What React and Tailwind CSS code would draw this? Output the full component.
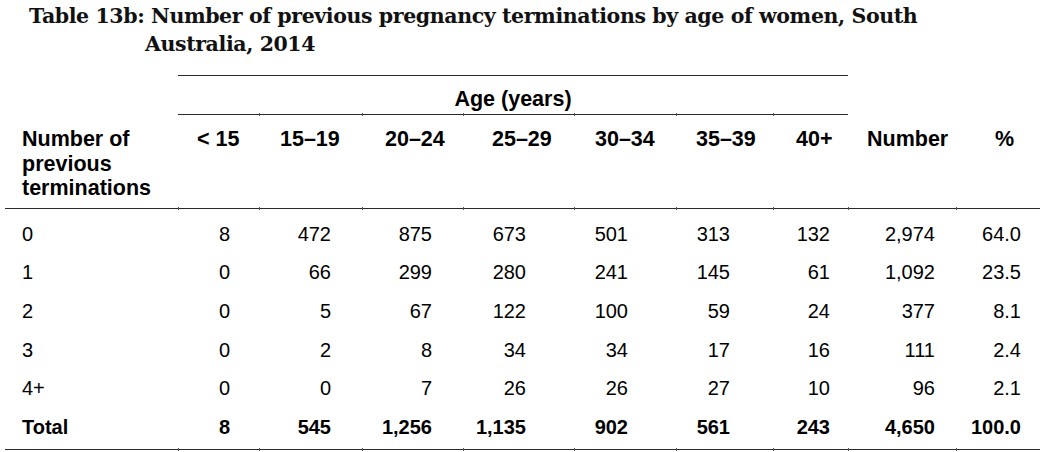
import React from "react";

const cols = [
  { h: "< 15", hp: "pl-[19px]", dp: "pr-[29px]" },
  { h: "15–19", hp: "pl-[21px]", dp: "pr-[31px]" },
  { h: "20–24", hp: "pl-[23px]", dp: "pr-[31px]" },
  { h: "25–29", hp: "pl-[29px]", dp: "pr-[48px]" },
  { h: "30–34", hp: "pl-[21px]", dp: "pr-[48px]" },
  { h: "35–39", hp: "pl-[20px]", dp: "pr-[43px]" },
  { h: "40+", hp: "pl-[23px]", dp: "pr-[18px]" },
  { h: "Number", hp: "pl-[19px]", dp: "pr-[21px]" },
  { h: "%", hp: "pl-[39px]", dp: "pr-[19px]" },
];

const rows = [
  ["0", "8", "472", "875", "673", "501", "313", "132", "2,974", "64.0"],
  ["1", "0", "66", "299", "280", "241", "145", "61", "1,092", "23.5"],
  ["2", "0", "5", "67", "122", "100", "59", "24", "377", "8.1"],
  ["3", "0", "2", "8", "34", "34", "17", "16", "111", "2.4"],
  ["4+", "0", "0", "7", "26", "26", "27", "10", "96", "2.1"],
  ["Total", "8", "545", "1,256", "1,135", "902", "561", "243", "4,650", "100.0"],
];

const grid =
  "grid grid-cols-[173px_81px_103px_101px_111px_102px_97px_75px_108px_84px]";

function Rule({ from = 0, to = 10, ticks = true }) {
  const cells = [];
  for (let i = 0; i < 10; i++) {
    if (i < from || i >= to) {
      cells.push(<div key={i} />);
    } else {
      cells.push(
        <div key={i} className="flex h-[3px] items-start">
          <div className="h-px w-full bg-[#2a2a2a]" />
        </div>
      );
    }
  }
  return (
    <div className="relative">
      <div className={grid}>{cells}</div>
      {ticks && (
        <div className={`${grid} absolute left-0 top-[-1px]`}>
          {Array.from({ length: 10 }).map((_, i) =>
            i > from && i < to ? (
              <div key={i} className="h-[3px] w-px bg-[#555]" />
            ) : (
              <div key={i} />
            )
          )}
        </div>
      )}
    </div>
  );
}

export default function App() {
  return (
    <div className="h-[452px] w-[1054px] overflow-hidden bg-white text-black">
      <div
        className="pl-[145px] pt-[2px] text-[20.5px] font-bold leading-[28px] tracking-[-0.4px] text-[#111] -indent-[116px]"
        style={{ fontFamily: '"DejaVu Serif", serif' }}
      >
        Table 13b: Number of previous pregnancy terminations by age of women, South
        <br />
        Australia, 2014
      </div>

      <div
        className="ml-[5px] mt-[17px] w-[1035px] text-[20px]"
        style={{ fontFamily: '"Liberation Sans", Arial, sans-serif' }}
      >
        <Rule from={1} to={8} ticks={false} />
        <div className={grid}>
          <div />
          <div className="col-span-7 pb-[3px] pt-[9px] text-center text-[21.5px] font-bold leading-[24px]">
            Age (years)
          </div>
        </div>
        <Rule from={1} to={8} />
        <div className={`${grid} pb-[7px] pt-[10px] text-[21.5px] font-bold leading-[24.5px]`}>
          <div className="pl-[17px]">
            Number of
            <br />
            previous
            <br />
            terminations
          </div>
          {cols.map((c) => (
            <div key={c.h} className={c.hp}>
              {c.h}
            </div>
          ))}
        </div>
        <Rule from={0} to={10} />
        <div className="pb-[3px] pt-[4px]">
          {rows.map((r, ri) => (
            <div
              key={r[0]}
              className={`${grid} h-[38.6px] items-center leading-[24px] ${
                ri === rows.length - 1 ? "font-bold" : ""
              }`}
            >
              <div className="pl-[17px]">{r[0]}</div>
              {r.slice(1).map((v, i) => (
                <div key={i} className={`text-right ${cols[i].dp}`}>
                  {v}
                </div>
              ))}
            </div>
          ))}
        </div>
        <Rule from={0} to={10} />
      </div>
    </div>
  );
}
